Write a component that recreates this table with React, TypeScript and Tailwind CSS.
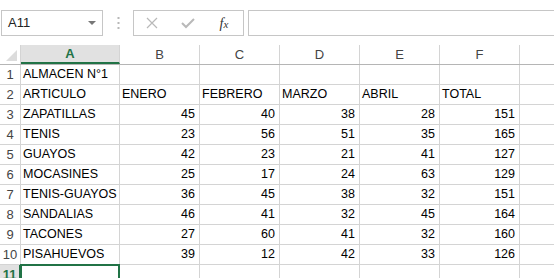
import React from "react";

const cols = ["A", "B", "C", "D", "E", "F", ""];
const widths = ["w-[99px]", "w-[80px]", "w-[80px]", "w-[80px]", "w-[80px]", "w-[80px]", "w-[40px]"];

type Cell = { v: string; num?: boolean };
const rows: Cell[][] = [
  [{ v: "ALMACEN N°1" }],
  [{ v: "ARTICULO" }, { v: "ENERO" }, { v: "FEBRERO" }, { v: "MARZO" }, { v: "ABRIL" }, { v: "TOTAL" }],
  ...[
    ["ZAPATILLAS", "45", "40", "38", "28", "151"],
    ["TENIS", "23", "56", "51", "35", "165"],
    ["GUAYOS", "42", "23", "21", "41", "127"],
    ["MOCASINES", "25", "17", "24", "63", "129"],
    ["TENIS-GUAYOS", "36", "45", "38", "32", "151"],
    ["SANDALIAS", "46", "41", "32", "45", "164"],
    ["TACONES", "27", "60", "41", "32", "160"],
    ["PISAHUEVOS", "39", "12", "42", "33", "126"],
  ].map((r) => r.map((v, i) => ({ v, num: i > 0 }))),
];

export default function App() {
  return (
    <div
      className="w-[554px] h-[278px] overflow-hidden bg-white text-black"
      style={{ fontFamily: '"Liberation Sans", Arial, sans-serif' }}
    >
      {/* formula bar */}
      <div className="h-[45px] flex items-start pt-[10px] pl-[1px]">
        <div className="w-[102px] h-[26px] border border-[#c6c6c6] flex items-center justify-between pl-[6px] pr-[6px] text-[13px] text-[#222]">
          <span>A11</span>
          <svg width="8" height="5" viewBox="0 0 8 5">
            <path d="M0 0 L8 0 L4 4 Z" fill="#777" />
          </svg>
        </div>
        <div className="w-[30px] h-[26px] flex items-center justify-center">
          <svg width="3" height="12" viewBox="0 0 3 12">
            <rect x="0.5" y="0" width="2" height="2" fill="#b8b8b8" />
            <rect x="0.5" y="5" width="2" height="2" fill="#b8b8b8" />
            <rect x="0.5" y="10" width="2" height="2" fill="#b8b8b8" />
          </svg>
        </div>
        <div className="w-[111px] h-[26px] border border-[#c6c6c6] flex items-center">
          <div className="w-[36px] flex justify-center">
            <svg width="12" height="12" viewBox="0 0 12 12">
              <path d="M1 1 L11 11 M11 1 L1 11" stroke="#b9b9b9" strokeWidth="1.2" />
            </svg>
          </div>
          <div className="w-[36px] flex justify-center">
            <svg width="14" height="12" viewBox="0 0 14 12">
              <path d="M1 6 L5 10 L13 2" stroke="#b9b9b9" strokeWidth="2" fill="none" />
            </svg>
          </div>
          <div
            className="w-[36px] flex justify-center text-[14px] italic text-[#333]"
            style={{ fontFamily: '"Liberation Serif", serif' }}
          >
            <span>
              f<span className="text-[11px]">x</span>
            </span>
          </div>
        </div>
        <div className="w-[4px]" />
        <div className="flex-1 h-[26px] border border-[#c6c6c6] border-r-0" />
      </div>

      {/* grid */}
      <div className="flex flex-col">
        {/* header row */}
        <div className="flex h-[20px] border-b border-[#b5b5b5]">
          <div className="w-[21px] h-full border-r border-[#d4d4d4] relative shrink-0">
            <svg className="absolute right-[3px] bottom-[3px]" width="11" height="11" viewBox="0 0 11 11">
              <path d="M11 0 L11 11 L0 11 Z" fill="#dcdcdc" />
            </svg>
          </div>
          {cols.map((c, i) => (
            <div
              key={i}
              className={`${widths[i]} shrink-0 h-full border-r border-[#d4d4d4] flex items-center justify-center text-[13px] ${
                i === 0
                  ? "bg-[#e1e1e1] text-[#217346] font-bold border-b-2 border-b-[#217346] -mb-[1px] h-[20px]"
                  : "text-[#444]"
              }`}
            >
              {c}
            </div>
          ))}
        </div>
        {/* data rows */}
        {Array.from({ length: 11 }).map((_, ri) => {
          const r = rows[ri] || [];
          const selected = ri === 10;
          return (
            <div key={ri} className="flex h-[20px] border-b border-[#d4d4d4]">
              <div
                className={`w-[21px] shrink-0 h-full flex items-center justify-center text-[13px] ${
                  selected
                    ? "bg-[#e1e1e1] text-[#217346] font-bold border-r-2 border-[#217346]"
                    : "text-[#444] border-r border-[#d4d4d4]"
                }`}
              >
                {ri + 1}
              </div>
              {cols.map((c, ci) => {
                const cell = r[ci];
                return (
                  <div
                    key={ci}
                    className={`${widths[ci]} shrink-0 h-full border-r border-[#d4d4d4] flex items-center text-[12.5px] pl-[2px] pr-[4px] relative ${
                      cell?.num ? "justify-end" : "justify-start"
                    }`}
                  >
                    {cell ? <span className="whitespace-nowrap">{cell.v}</span> : null}
                    {selected && ci === 0 ? (
                      <div className="absolute left-[-1px] top-[-1px] right-[-1px] bottom-[-1px] border-2 border-[#217346]" />
                    ) : null}
                  </div>
                );
              })}
            </div>
          );
        })}
      </div>
    </div>
  );
}
